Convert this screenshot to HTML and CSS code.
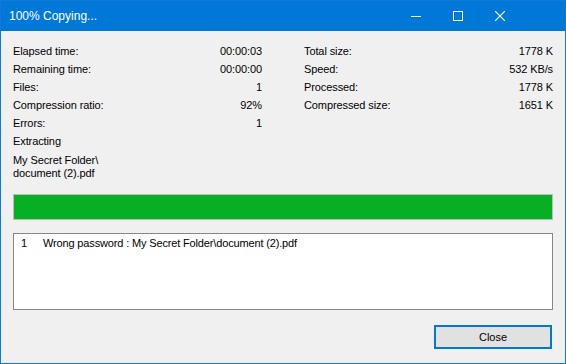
FILE: index.html
```html
<!DOCTYPE html>
<html lang="en">
<head>
    <meta charset="UTF-8">
    <title>100% Copying...</title>
    <link rel="stylesheet" href="styles.css">
</head>
<body>
    <div class="window">
        <div class="titlebar">
            <span class="title">100% Copying...</span>
            <div class="controls">
                <span class="ctl">
                    <svg width="10" height="10" viewBox="0 0 10 10"><path d="M0 5.5h10" stroke="#fff" stroke-width="1"/></svg>
                </span>
                <span class="ctl">
                    <svg width="10" height="10" viewBox="0 0 10 10"><rect x="0.5" y="0.5" width="9" height="9" fill="none" stroke="#fff" stroke-width="1"/></svg>
                </span>
                <span class="ctl">
                    <svg width="10" height="10" viewBox="0 0 10 10"><path d="M0 0L10 10M10 0L0 10" stroke="#fff" stroke-width="1.1"/></svg>
                </span>
            </div>
        </div>
        <div class="content">
            <div class="stats">
                <div class="col">
                    <div class="row"><span>Elapsed time:</span><span>00:00:03</span></div>
                    <div class="row"><span>Remaining time:</span><span>00:00:00</span></div>
                    <div class="row"><span>Files:</span><span>1</span></div>
                    <div class="row"><span>Compression ratio:</span><span>92%</span></div>
                    <div class="row"><span>Errors:</span><span>1</span></div>
                    <div class="row"><span>Extracting</span></div>
                </div>
                <div class="col">
                    <div class="row"><span>Total size:</span><span>1778 K</span></div>
                    <div class="row"><span>Speed:</span><span>532 KB/s</span></div>
                    <div class="row"><span>Processed:</span><span>1778 K</span></div>
                    <div class="row"><span>Compressed size:</span><span>1651 K</span></div>
                </div>
            </div>
            <div class="current-file">My Secret Folder\<br>document (2).pdf</div>
            <div class="progress"><div class="progress-fill" style="width: 100%"></div></div>
            <div class="log">
                <div class="log-line"><span class="log-num">1</span><span>Wrong password : My Secret Folder\document (2).pdf</span></div>
            </div>
            <div class="buttons">
                <button class="btn">Close</button>
            </div>
        </div>
    </div>
</body>
</html>
```

FILE: styles.css
```css
* {
    box-sizing: border-box;
}
body {
    margin: 0;
    font-family: "Liberation Sans", Arial, sans-serif;
    font-size: 11px;
    color: #000;
}
.window {
    width: 566px;
    height: 364px;
    border: 1px solid #0f7bd6;
    background-color: #f0f0f0;
    display: flex;
    flex-direction: column;
}
.titlebar {
    height: 30px;
    background-color: #0078d7;
    color: #fff;
    display: flex;
    align-items: center;
    padding-left: 8px;
}
.title {
    font-size: 12px;
    flex: 1;
}
.controls {
    display: flex;
    padding-right: 44px;
}
.ctl {
    width: 42px;
    height: 30px;
    display: flex;
    align-items: center;
    justify-content: center;
}
.content {
    flex: 1;
    padding: 11px 12px 14px 12px;
    display: flex;
    flex-direction: column;
}
.stats {
    display: grid;
    grid-template-columns: 249px 249px;
    column-gap: 42px;
}
.row {
    height: 18px;
    line-height: 18px;
    display: flex;
    justify-content: space-between;
    letter-spacing: -0.1px;
}
.current-file {
    line-height: 13px;
    margin-top: 4px;
    letter-spacing: -0.1px;
}
.progress {
    margin-top: 14px;
    height: 26px;
    border: 1px solid #bcbcbc;
    background-color: #e6e6e6;
}
.progress-fill {
    height: 100%;
    background-color: #06b025;
}
.log {
    margin-top: 13px;
    height: 77px;
    border: 1px solid #828790;
    background-color: #fff;
    padding: 3px 7px;
}
.log-line {
    display: flex;
    line-height: 13px;
    letter-spacing: -0.15px;
}
.log-num {
    width: 22px;
}
.buttons {
    margin-top: auto;
    display: flex;
    justify-content: flex-end;
}
.btn {
    width: 118px;
    height: 24px;
    margin-right: 1px;
    border: 2px solid #0078d7;
    background-color: #e1e1e1;
    font-family: "Liberation Sans", Arial, sans-serif;
    font-size: 11px;
    color: #000;
    padding: 0;
}
```
